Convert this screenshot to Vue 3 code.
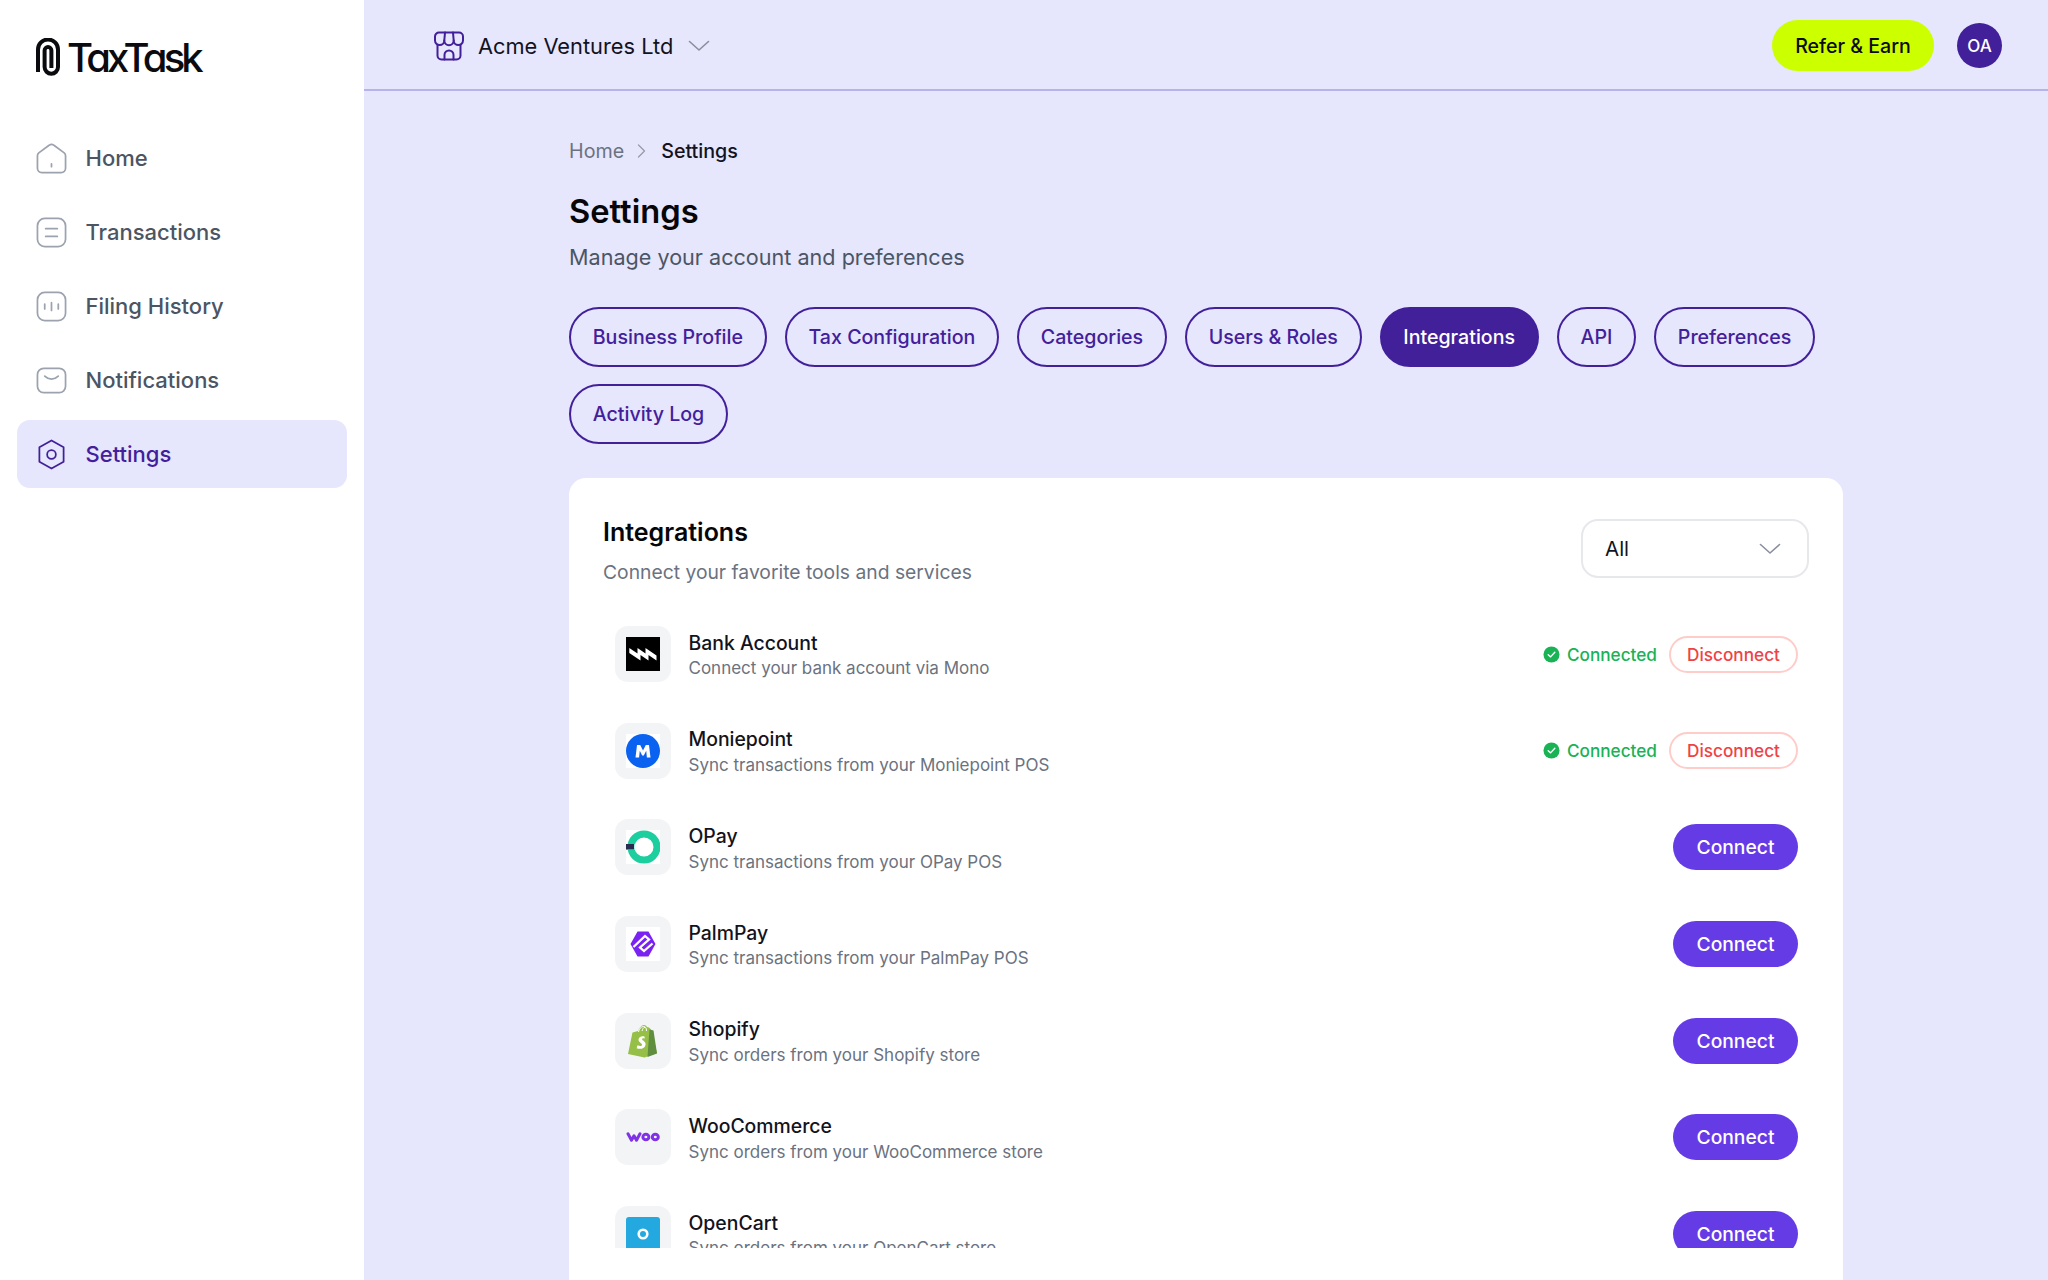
<script setup>
const nav = [
  { label: 'Home', icon: 'home' },
  { label: 'Transactions', icon: 'list' },
  { label: 'Filing History', icon: 'bars' },
  { label: 'Notifications', icon: 'inbox' },
  { label: 'Settings', icon: 'hex', active: true },
]
const tabs = ['Business Profile', 'Tax Configuration', 'Categories', 'Users & Roles', 'Integrations', 'API', 'Preferences', 'Activity Log']
const rows = [
  { name: 'Bank Account', desc: 'Connect your bank account via Mono', logo: 'mono', connected: true },
  { name: 'Moniepoint', desc: 'Sync transactions from your Moniepoint POS', logo: 'monie', connected: true },
  { name: 'OPay', desc: 'Sync transactions from your OPay POS', logo: 'opay' },
  { name: 'PalmPay', desc: 'Sync transactions from your PalmPay POS', logo: 'palm' },
  { name: 'Shopify', desc: 'Sync orders from your Shopify store', logo: 'shopify' },
  { name: 'WooCommerce', desc: 'Sync orders from your WooCommerce store', logo: 'woo' },
  { name: 'OpenCart', desc: 'Sync orders from your OpenCart store', logo: 'opencart' },
]
</script>

<template>
  <div class="app">
    <aside class="side">
      <div class="brand">
        <svg class="clip" viewBox="0 0 24 40" fill="none" stroke="#0b0b0f" stroke-width="4" stroke-linecap="butt">
          <path d="M2 34V11.500a10 10 0 0 1 20 0V29a6.700 6.700 0 0 1-13.400 0V12.500a3.400 3.400 0 0 1 6.800 0V30" />
        </svg>
        <span class="word">TaxTask</span>
      </div>
      <nav class="nav">
        <a v-for="n in nav" :key="n.label" class="nav-item" :class="{ on: n.active }">
          <svg class="nav-ico" viewBox="0 0 32 32" fill="none" stroke-width="1.800" stroke-linecap="round" stroke-linejoin="round">
            <template v-if="n.icon === 'home'">
              <path d="M1.500 13.200c0-1.200.5-2.200 1.400-3L13.500 2.400c1.500-1.200 3.500-1.200 5 0l10.600 7.800c.9.800 1.400 1.800 1.400 3V26c0 2.600-2 4.500-4.500 4.500H6c-2.500 0-4.500-1.900-4.500-4.500z" />
              <path d="M16 21.500v3" />
            </template>
            <template v-else-if="n.icon === 'list'">
              <rect x="1.500" y="1.500" width="29" height="29" rx="7.500" />
              <path d="M10 12h12M10 20h12" />
            </template>
            <template v-else-if="n.icon === 'bars'">
              <rect x="1.500" y="1.500" width="29" height="29" rx="7.500" />
              <path d="M9 13.500v5M16 12v8M23 13.500v5" />
            </template>
            <template v-else-if="n.icon === 'inbox'">
              <rect x="1.500" y="3.500" width="29" height="25" rx="6.500" />
              <path d="M9 11.500c4 4 10 4 14 0" />
            </template>
            <template v-else>
              <path d="M16 1.500 28.500 8.500V23.500L16 30.500 3.500 23.500V8.500z" />
              <circle cx="16" cy="16" r="4.500" />
            </template>
          </svg>
          <span>{{ n.label }}</span>
        </a>
      </nav>
    </aside>

    <div class="main">
      <header class="top">
        <div class="biz">
          <svg class="store" viewBox="0 0 30 30" fill="none" stroke="#42209a" stroke-width="2" stroke-linejoin="round" stroke-linecap="round">
            <path d="M3.500 14v10.500a4 4 0 0 0 4 4h15a4 4 0 0 0 4-4V14" />
            <path d="M5 1.500h20a4 4 0 0 1 4 4v4a4.500 4.500 0 0 1-4.700 4.500 4.600 4.600 0 0 1-4.600-4.500 4.700 4.700 0 0 1-9.400 0A4.600 4.600 0 0 1 5.700 14 4.500 4.500 0 0 1 1 9.500v-4a4 4 0 0 1 4-4z" />
            <path d="M10.300 9.500 11 1.500M19.700 9.500 19 1.500" />
            <path d="M10.500 28.500V24a4.500 4.500 0 0 1 9 0v4.500" />
          </svg>
          <span class="biz-name">Acme Ventures Ltd</span>
          <svg class="biz-chev" viewBox="0 0 22 12" fill="none" stroke="#8b8d9c" stroke-width="1.600" stroke-linecap="round" stroke-linejoin="round"><path d="M1.500 1.500 11 10l9.500-8.500" /></svg>
        </div>
        <div class="top-right">
          <button class="refer">Refer &amp; Earn</button>
          <div class="avatar">OA</div>
        </div>
      </header>

      <main class="content">
        <div class="wrap">
          <div class="crumbs">
            <span class="crumb-home">Home</span>
            <svg class="crumb-sep" viewBox="0 0 9 16" fill="none" stroke="#9a9ba8" stroke-width="1.300" stroke-linecap="round" stroke-linejoin="round"><path d="M1.500 2 7.500 8l-6 6" /></svg>
            <span class="crumb-cur">Settings</span>
          </div>
          <h1 class="title">Settings</h1>
          <p class="sub">Manage your account and preferences</p>

          <div class="tabs">
            <button v-for="t in tabs" :key="t" class="tab" :class="{ on: t === 'Integrations' }">{{ t }}</button>
          </div>

          <section class="card">
            <div class="card-head">
              <div>
                <h2 class="card-title">Integrations</h2>
                <p class="card-sub">Connect your favorite tools and services</p>
              </div>
              <div class="select">
                <span>All</span>
                <svg class="sel-chev" viewBox="0 0 22 12" fill="none" stroke="#8a8f9c" stroke-width="1.600" stroke-linecap="round" stroke-linejoin="round"><path d="M1.500 1.500 11 10l9.500-8.500" /></svg>
              </div>
            </div>

            <div class="list">
              <div v-for="r in rows" :key="r.name" class="row">
                <div class="logo-box">
                  <svg v-if="r.logo === 'mono'" class="logo" viewBox="0 0 34 34">
                    <rect width="34" height="34" fill="#000" />
                    <path fill="#fff" d="M3.300 11 11.500 16.500V11L19.500 16.500V11L30.500 18.500V23.500L22.500 18V23.500L14.500 18V23.500L3.300 16z" />
                  </svg>
                  <svg v-else-if="r.logo === 'monie'" class="logo" viewBox="0 0 34 34">
                    <rect width="34" height="34" fill="#fff" />
                    <circle cx="17" cy="17" r="17" fill="#0a62f0" />
                    <path fill="#fff" d="M9.500 23.500 11 11h3.200L17 16.500 19.800 11H23l1.500 12.500h-3.600l-.7-6.700-2.400 4.700h-1.600l-2.400-4.700-.7 6.700z" />
                  </svg>
                  <svg v-else-if="r.logo === 'opay'" class="logo" viewBox="0 0 34 34">
                    <rect width="34" height="34" fill="#fff" />
                    <circle cx="18" cy="17" r="13" fill="none" stroke="#1dcf9f" stroke-width="7" />
                    <rect x="0" y="14" width="8.500" height="6" fill="#fff" />
                    <rect x="0" y="14" width="8" height="5.600" fill="#2b2b52" />
                  </svg>
                  <svg v-else-if="r.logo === 'palm'" class="logo" viewBox="0 0 34 34">
                    <rect width="34" height="34" fill="#fff" />
                    <path fill="#7a22f2" d="M11.500 4.500h11l7 12.500-7 12.500h-11l-7-12.500z" />
                    <path fill="none" stroke="#fff" stroke-width="2.300" d="M7.500 20 19 9l4 3.500-9 8 4 3.500 8.500-7.500" />
                  </svg>
                  <svg v-else-if="r.logo === 'shopify'" class="logo" viewBox="0 0 34 34">
                    <path fill="#95bf47" d="M2 30 6.500 8.500l5.500-1.500C13.500 4 15.500 1 18 1c1.500 0 2.500 1 3 2l2 .5 2.500 2.500L31 29l-12.500 4.500z" />
                    <path fill="#5e8e3e" d="M23.500 5.500 21.500 33 31 29.500 27.500 6.500z" />
                    <path fill="none" stroke="#fff" stroke-width="1" d="M12.500 8c.5-3 2.500-5.500 5-5.500 2 0 3 1.500 3 4.500M16 7c.5-2 1.500-3.500 3-4" />
                    <path fill="#fff" d="M18.500 12.500c-1-.5-5.500-1-6 3-.3 3 4 3.500 3.500 5.500-.2 1-2 1.500-4.500.2l-.9 3c3.500 1.500 8.700.5 9-4 .2-3-3.600-3.700-3.500-5 .1-.8 1.300-1.200 2.700-.5z" />
                  </svg>
                  <svg v-else-if="r.logo === 'woo'" class="logo" viewBox="0 0 34 34">
                    <path fill="none" stroke="#7f32e6" stroke-width="3" stroke-linecap="round" stroke-linejoin="round" d="M2 13.800 5.500 20.200 8 15.700 10.500 20.200 14 13.800" />
                    <ellipse cx="19.900" cy="17" rx="3" ry="2.800" fill="none" stroke="#7f32e6" stroke-width="3" />
                    <ellipse cx="29.300" cy="17" rx="3" ry="2.800" fill="none" stroke="#7f32e6" stroke-width="3" />
                  </svg>
                  <svg v-else class="logo" viewBox="0 0 34 34">
                    <rect width="34" height="34" rx="3" fill="#23a8e0" />
                    <circle cx="17" cy="17" r="4.300" fill="none" stroke="#fff" stroke-width="2.600" />
                  </svg>
                </div>
                <div class="meta">
                  <div class="name">{{ r.name }}</div>
                  <div class="desc">{{ r.desc }}</div>
                </div>
                <div v-if="r.connected" class="status">
                  <span class="ok">
                    <svg class="ok-ico" viewBox="0 0 18 18"><circle cx="9" cy="9" r="8.500" fill="#19b255" /><path d="M5.500 9.300 8 11.500 12.500 6.700" fill="none" stroke="#fff" stroke-width="1.500" stroke-linecap="round" stroke-linejoin="round" /></svg>
                    Connected
                  </span>
                  <button class="disc">Disconnect</button>
                </div>
                <button v-else class="conn">Connect</button>
              </div>
            </div>
          </section>
        </div>
      </main>
    </div>
  </div>
</template>

<style>
html, body { margin: 0; padding: 0; }
</style>

<style scoped>
.app { display: flex; height: 1280px; overflow: hidden; font-family: Inter, "Liberation Sans", sans-serif; background: #e6e6fd; color: #12131d; }
.side { width: 364px; flex: none; background: #fff; padding: 0 17px; box-sizing: border-box; }
.brand { display: flex; align-items: center; gap: 7px; height: 116px; padding-left: 19px; }
.clip { width: 24px; height: 40px; flex: none; }
.word { font-size: 40px; font-weight: 500; letter-spacing: -3.800px; color: #0b0b0f; font-feature-settings: "cv11"; line-height: 1; }
.nav { display: flex; flex-direction: column; gap: 6px; margin-top: 8px; }
.nav-item { display: flex; align-items: center; gap: 18.500px; height: 68px; padding-left: 19px; border-radius: 13px; font-size: 22px; font-weight: 500; color: #4b5563; stroke: #9ca3af; }
.nav-item.on { background: #e6e6fd; color: #42209a; stroke: #42209a; }
.nav-ico { width: 31px; height: 31px; flex: none; }
.main { flex: 1; min-width: 0; display: flex; flex-direction: column; }
.top { height: 91px; box-sizing: border-box; border-bottom: 2px solid #b9b2ea; display: flex; align-items: center; justify-content: space-between; padding: 2px 46px 0 70px; flex: none; }
.biz { display: flex; align-items: center; }
.store { width: 30px; height: 30px; flex: none; margin-right: 14px; }
.biz-name { font-size: 21.800px; color: #12131d; }
.biz-chev { width: 22px; height: 12px; margin-left: 15px; }
.top-right { display: flex; align-items: center; gap: 23px; }
.refer { height: 51px; width: 162px; border: 0; border-radius: 26px; background: #ccff00; font: 500 19.600px Inter, sans-serif; color: #0b0b0f; padding: 0; }
.avatar { width: 45px; height: 45px; border-radius: 50%; background: #42209a; color: #fff; font-size: 17px; font-weight: 500; display: flex; align-items: center; justify-content: center; }
.content { flex: 1; min-height: 0; overflow: hidden; }
.wrap { width: 1274px; margin: 0 auto; padding-top: 47px; }
.crumbs { display: flex; align-items: center; font-size: 19.700px; height: 26px; }
.crumb-home { color: #6b7280; }
.crumb-sep { width: 9px; height: 16px; margin: 0 15px 0 13px; }
.crumb-cur { color: #12131d; font-weight: 500; }
.title { margin: 25px 0 0; font-size: 32.700px; line-height: 44px; font-weight: 600; color: #060608; }
.sub { margin: 9px 0 0; font-size: 21.600px; line-height: 30px; color: #4b5563; }
.tabs { display: flex; flex-wrap: wrap; gap: 17px 18px; margin-top: 35px; }
.tab { height: 60px; padding: 0 21.750px; box-sizing: border-box; border: 2px solid #42209a; border-radius: 30px; background: transparent; color: #42209a; font: 500 19.600px Inter, sans-serif; white-space: nowrap; }
.tab.on { background: #42209a; color: #fff; }
.card { margin-top: 34px; background: #fff; border-radius: 17px; padding: 41px 34px 60px 34px; }
.card-head { display: flex; justify-content: space-between; align-items: flex-start; height: 73px; }
.card-title { margin: -4px 0 0; font-size: 25px; line-height: 34px; font-weight: 600; color: #060608; }
.card-sub { margin: 8.500px 0 0; font-size: 19.300px; line-height: 28px; color: #6b7280; }
.select { width: 228px; height: 59px; box-sizing: border-box; border: 2px solid #e7e8ec; border-radius: 17px; display: flex; align-items: center; justify-content: space-between; padding: 0 26px 0 22px; font-size: 20.500px; color: #12131d; }
.sel-chev { width: 22px; height: 12px; }
.list { margin-top: 34px; height: 622px; overflow: hidden; padding: 0 11px 0 12px; }
.row { display: flex; align-items: center; height: 56px; margin-bottom: 40.670px; }
.logo-box { width: 56px; height: 56px; border-radius: 13px; background: #f3f4f6; display: flex; align-items: center; justify-content: center; flex: none; }
.logo { width: 34px; height: 34px; display: block; }
.meta { margin-left: 17.500px; flex: 1; min-width: 0; padding-top: 4px; }
.name { font-size: 19.400px; line-height: 25px; font-weight: 500; color: #12131d; }
.desc { font-size: 17px; line-height: 25px; color: #6b7280; margin-top: 0.500px; }
.status { display: flex; align-items: center; gap: 12px; }
.ok { display: flex; align-items: center; gap: 7px; font-size: 17.200px; font-weight: 500; color: #19b255; }
.ok-ico { width: 17px; height: 17px; flex: none; }
.disc { width: 129px; height: 37px; box-sizing: border-box; padding: 0; border: 2px solid #fecdca; border-radius: 19px; background: #fff; color: #f04246; font: 500 17.200px Inter, sans-serif; }
.conn { width: 125px; height: 46px; padding: 0; border: 0; border-radius: 23px; background: #653be6; color: #fff; font: 500 19.300px Inter, sans-serif; }
</style>
